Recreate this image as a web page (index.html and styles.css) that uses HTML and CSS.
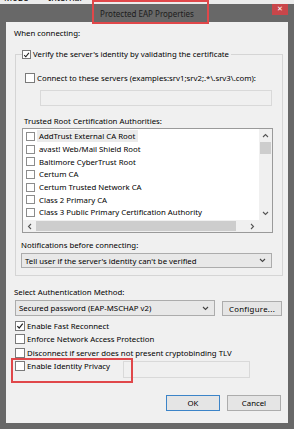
FILE: index.html
```html
<!DOCTYPE html>
<html lang="en">
<head>
    <meta charset="UTF-8">
    <meta name="viewport" content="width=device-width, initial-scale=1.0">
    <title>Protected EAP Properties</title>
    <link rel="stylesheet" href="styles.css">
</head>
<body>
    <!-- window behind the dialog, only its bottom edge shows -->
    <div class="behind">
        <span>Mode</span>
        <span>Internal</span>
    </div>

    <div class="titlebar">
        <span class="title">Protected EAP Properties</span>
        <button class="close">&#x2715;</button>
    </div>

    <div class="dialog">
        <div class="label top-label">When connecting:</div>

        <fieldset class="group">
            <legend>
                <span class="cb"><svg viewBox="0 0 9 9"><polyline points="1.5,4.6 3.6,6.8 7.6,1.8"/></svg></span>
                Verify the server's identity by validating the certificate
            </legend>

            <div class="check connect">
                <span class="cb"></span>
                Connect to these servers (examples:srv1;srv2;.*\.srv3\.com):
            </div>
            <div class="textbox servers"></div>

            <div class="label trusted">Trusted Root Certification Authorities:</div>
            <div class="listbox">
                <ul class="items">
                    <li class="selected"><span class="cb"></span><span class="txt">AddTrust External CA Root</span></li>
                    <li><span class="cb"></span><span class="txt">avast! Web/Mail Shield Root</span></li>
                    <li><span class="cb"></span><span class="txt">Baltimore CyberTrust Root</span></li>
                    <li><span class="cb"></span><span class="txt">Certum CA</span></li>
                    <li><span class="cb"></span><span class="txt">Certum Trusted Network CA</span></li>
                    <li><span class="cb"></span><span class="txt">Class 2 Primary CA</span></li>
                    <li><span class="cb"></span><span class="txt">Class 3 Public Primary Certification Authority</span></li>
                </ul>
                <div class="vscroll">
                    <svg class="arrow" viewBox="0 0 7 5"><polyline points="1,4 3.5,1.5 6,4"/></svg>
                    <div class="vthumb"></div>
                    <div class="spacer"></div>
                    <svg class="arrow" viewBox="0 0 7 5"><polyline points="1,1 3.5,3.5 6,1"/></svg>
                </div>
                <div class="hscroll">
                    <svg class="arrow" viewBox="0 0 5 7"><polyline points="4,1 1.5,3.5 4,6"/></svg>
                    <div class="hthumb"></div>
                    <div class="spacer"></div>
                    <svg class="arrow" viewBox="0 0 5 7"><polyline points="1,1 3.5,3.5 1,6"/></svg>
                </div>
                <div class="corner"></div>
            </div>

            <div class="label notif">Notifications before connecting:</div>
            <div class="combo notif-combo">
                <span>Tell user if the server's identity can't be verified</span>
                <svg class="chev" viewBox="0 0 7 5"><polyline points="1,1 3.5,3.5 6,1"/></svg>
            </div>
        </fieldset>

        <div class="label method">Select Authentication Method:</div>
        <div class="method-row">
            <div class="combo method-combo">
                <span>Secured password (EAP-MSCHAP v2)</span>
                <svg class="chev" viewBox="0 0 7 5"><polyline points="1,1 3.5,3.5 6,1"/></svg>
            </div>
            <button class="btn configure">Configure...</button>
        </div>

        <div class="options">
            <div class="check"><span class="cb"><svg viewBox="0 0 9 9"><polyline points="1.5,4.6 3.6,6.8 7.6,1.8"/></svg></span>Enable Fast Reconnect</div>
            <div class="check"><span class="cb"></span>Enforce Network Access Protection</div>
            <div class="check"><span class="cb"></span>Disconnect if server does not present cryptobinding TLV</div>
            <div class="privacy-row">
                <div class="check privacy"><span class="cb"></span>Enable Identity Privacy</div>
                <div class="textbox identity"></div>
            </div>
        </div>

        <div class="buttons">
            <button class="btn default">OK</button>
            <button class="btn">Cancel</button>
        </div>
    </div>

    <!-- red annotation boxes drawn over the screenshot -->
    <div class="mark mark-title"></div>
    <div class="mark mark-privacy"></div>
</body>
</html>
```

FILE: styles.css
```css
:root {
    --frame: #686868;
    --face: #f0f0f0;
    --border: #acacac;
    --group: #d5d5d5;
    --mark: #e0474a;
}

* {
    margin: 0;
    padding: 0;
    box-sizing: border-box;
}

body {
    width: 294px;
    height: 429px;
    overflow: hidden;
    position: relative;
    background-color: var(--frame);
    font-family: "Noto Sans", "DejaVu Sans", sans-serif;
    font-size: 7.8px;
    color: #000;
}

.behind {
    height: 4px;
    overflow: hidden;
    background-color: #ececec;
    display: flex;
    gap: 20px;
    padding-left: 4px;
}

.behind span {
    font-size: 9px;
    line-height: 10px;
    margin-top: -7px;
}

/* Title bar */
.titlebar {
    height: 18px;
    display: grid;
    grid-template-columns: 1fr auto 1fr;
    align-items: center;
}

.title {
    grid-column: 2;
    color: #1c1c1c;
    font-size: 8px;
}

.close {
    grid-column: 3;
    justify-self: end;
    align-self: start;
    width: 16px;
    height: 11px;
    margin-right: 6px;
    border: none;
    background-color: #c9464a;
    color: #fff;
    font-size: 7px;
    font-weight: bold;
    line-height: 11px;
    font-family: "DejaVu Sans", sans-serif;
}

/* Dialog body */
.dialog {
    margin: 0 6px;
    height: 401px;
    background-color: var(--face);
    padding: 5px 0 0 8px;
}

.label {
    line-height: 12px;
    white-space: nowrap;
}

.cb {
    width: 10px;
    height: 10px;
    flex: none;
    border: 1px solid #7a7a7a;
    background-color: #fff;
    display: inline-flex;
}

.cb svg {
    width: 8px;
    height: 8px;
    fill: none;
    stroke: #222;
    stroke-width: 1.4;
}

.check {
    display: flex;
    align-items: center;
    gap: 2px;
    height: 13.5px;
    white-space: nowrap;
}

.group {
    margin: 10px 0 0 1px;
    width: 268px;
    border: 1px solid var(--group);
    padding: 0 0 7px 0;
}

.group legend {
    margin-left: 6px;
    padding-right: 2px;
    display: flex;
    align-items: center;
    gap: 2px;
    line-height: 11px;
    white-space: nowrap;
}

.group legend .cb {
    width: 9px;
    height: 9px;
}

.connect {
    margin: 12px 0 0 9px;
    height: 12px;
}

.textbox {
    border: 1px solid #d9d9d9;
    background-color: var(--face);
}

.servers {
    margin: 6px 0 0 24px;
    width: 232px;
    height: 16px;
}

.trusted {
    margin: 9px 0 0 8px;
}

/* Certificate list */
.listbox {
    margin: 1px 0 0 6px;
    width: 251px;
    height: 105px;
    border: 1px solid #9a9a9a;
    background-color: #fff;
    display: grid;
    grid-template-columns: 1fr 13px;
    grid-template-rows: 1fr 12px;
    overflow: hidden;
}

.items {
    list-style: none;
    padding: 1px 0 0 3px;
    overflow: hidden;
}

.items li {
    height: 12.7px;
    display: flex;
    align-items: center;
    white-space: nowrap;
}

.items .cb {
    width: 9px;
    height: 9px;
    border-color: #8c8c8c;
}

.items .txt {
    margin-left: 2px;
    padding: 0 2px;
    line-height: 12px;
}

.items .selected .txt {
    background-color: #ebebeb;
    padding-right: 3px;
}

.vscroll,
.hscroll {
    background-color: var(--face);
    display: flex;
    align-items: center;
}

.vscroll {
    flex-direction: column;
}

.arrow {
    flex: none;
    fill: none;
    stroke: #555;
    stroke-width: 1.1;
}

.vscroll .arrow {
    width: 7px;
    height: 5px;
    margin: 4px 0;
}

.hscroll .arrow {
    width: 5px;
    height: 7px;
    margin: 0 4px;
}

.vthumb {
    width: 11px;
    height: 12px;
    background-color: #cdcdcd;
}

.hthumb {
    width: 200px;
    height: 10px;
    background-color: #cdcdcd;
}

.spacer {
    flex: 1;
}

.corner {
    background-color: var(--face);
}

.notif {
    margin: 6px 0 0 5px;
}

/* Combo boxes and buttons */
.combo {
    display: flex;
    align-items: center;
    justify-content: space-between;
    border: 1px solid var(--border);
    background-color: #e8e8e8;
    padding: 0 5px 0 3px;
    white-space: nowrap;
}

.chev {
    width: 7px;
    height: 5px;
    fill: none;
    stroke: #444;
    stroke-width: 1.1;
}

.notif-combo {
    margin: 2px 0 0 5px;
    width: 251px;
    height: 15px;
}

.method {
    margin-top: 10px;
}

.method-row {
    display: flex;
    gap: 7px;
    margin: 2px 0 0 1px;
}

.method-combo {
    width: 200px;
    height: 16px;
}

.btn {
    height: 16px;
    border: 1px solid var(--border);
    background-color: #e5e5e5;
    font-family: inherit;
    font-size: 7.8px;
    color: #000;
}

.configure {
    width: 60px;
    height: 15px;
    margin-top: 1px;
    letter-spacing: 0.3px;
}

.options {
    margin: 3px 0 0 1px;
}

.privacy-row {
    display: flex;
    align-items: flex-start;
}

.privacy {
    width: 108px;
}

.identity {
    margin-top: 1.5px;
    width: 127px;
    height: 17px;
}

.buttons {
    display: flex;
    justify-content: flex-end;
    gap: 7px;
    margin: 17px 7px 0 0;
}

.buttons .btn {
    width: 54px;
}

.buttons .default {
    border-color: #3c84c8;
}

/* Annotation boxes */
.mark {
    position: absolute;
    border: 2px solid var(--mark);
}

.mark-title {
    left: 92px;
    top: 0;
    width: 117px;
    height: 24px;
}

.mark-privacy {
    left: 11px;
    top: 358px;
    width: 122px;
    height: 25px;
}
```
